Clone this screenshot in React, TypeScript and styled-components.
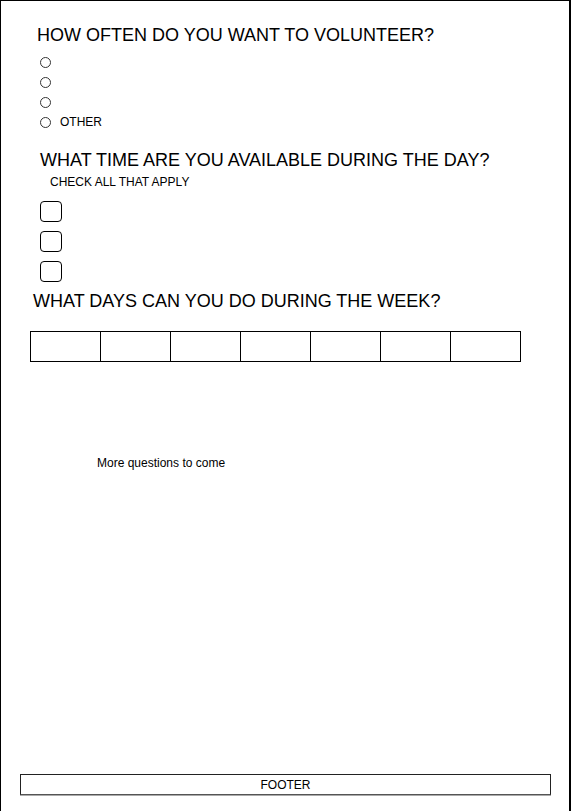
import React from "react";
import styled, { createGlobalStyle } from "styled-components";

const Global = createGlobalStyle`
  html, body { margin: 0; padding: 0; background: #fff; }
  body { font-family: "Liberation Sans", Arial, Helvetica, sans-serif; color: #000; }
`;

const Page = styled.div`
  box-sizing: border-box;
  width: 571px;
  height: 830px;
  border: 1px solid #000;
  border-right-width: 2px;
  display: flex;
  flex-direction: column;
  padding-top: 24px;
`;

const Heading = styled.h2<{ $left: number; $top: number }>`
  margin: ${(p) => p.$top}px 0 0 ${(p) => p.$left}px;
  font-size: 18px;
  line-height: 20px;
  font-weight: 400;
`;

const RadioList = styled.div`
  display: flex;
  flex-direction: column;
  margin: 7px 0 0 39px;
`;

const RadioRow = styled.label`
  display: flex;
  align-items: center;
  height: 20px;
  gap: 9px;
  font-size: 12px;
`;

const RadioCircle = styled.span`
  box-sizing: border-box;
  width: 11px;
  height: 11px;
  border: 1px solid #333;
  border-radius: 50%;
  background: #fff;
`;

const Hint = styled.div`
  margin: 5px 0 0 49px;
  font-size: 12px;
  line-height: 14px;
`;

const CheckList = styled.div`
  display: flex;
  flex-direction: column;
  gap: 9px;
  margin: 12px 0 0 39px;
`;

const CheckBox = styled.span`
  box-sizing: border-box;
  width: 22px;
  height: 21px;
  border: 1px solid #000;
  border-radius: 4px;
  background: #fff;
`;

const DayTable = styled.div`
  display: grid;
  grid-template-columns: repeat(7, 70px);
  margin: 20px 0 0 29px;
  width: max-content;
  border-left: 1px solid #000;
`;

const DayCell = styled.div`
  box-sizing: border-box;
  height: 31px;
  border: 1px solid #000;
  border-left: none;
`;

const Note = styled.div`
  margin: 94px 0 0 96px;
  font-size: 12px;
  line-height: 14px;
`;

const Spacer = styled.div`
  flex: 1;
`;

const Footer = styled.footer`
  box-sizing: border-box;
  margin: 0 0 34px 19px;
  width: 531px;
  height: 21px;
  border: 1px solid #222;
  border-bottom-color: #555;
  box-shadow: 0 1px 0 #aaa;
  display: flex;
  align-items: center;
  justify-content: center;
  font-size: 12px;
`;

export default function App() {
  return (
    <>
      <Global />
      <Page>
        <Heading $left={36} $top={0}>HOW OFTEN DO YOU WANT TO VOLUNTEER?</Heading>
        <RadioList>
          <RadioRow><RadioCircle /></RadioRow>
          <RadioRow><RadioCircle /></RadioRow>
          <RadioRow><RadioCircle /></RadioRow>
          <RadioRow><RadioCircle />OTHER</RadioRow>
        </RadioList>
        <Heading $left={39} $top={18}>WHAT TIME ARE YOU AVAILABLE DURING THE DAY?</Heading>
        <Hint>CHECK ALL THAT APPLY</Hint>
        <CheckList>
          <CheckBox />
          <CheckBox />
          <CheckBox />
        </CheckList>
        <Heading $left={32} $top={9}>WHAT DAYS CAN YOU DO DURING THE WEEK?</Heading>
        <DayTable>
          {Array.from({ length: 7 }).map((_, i) => (
            <DayCell key={i} />
          ))}
        </DayTable>
        <Note>More questions to come</Note>
        <Spacer />
        <Footer>FOOTER</Footer>
      </Page>
    </>
  );
}
